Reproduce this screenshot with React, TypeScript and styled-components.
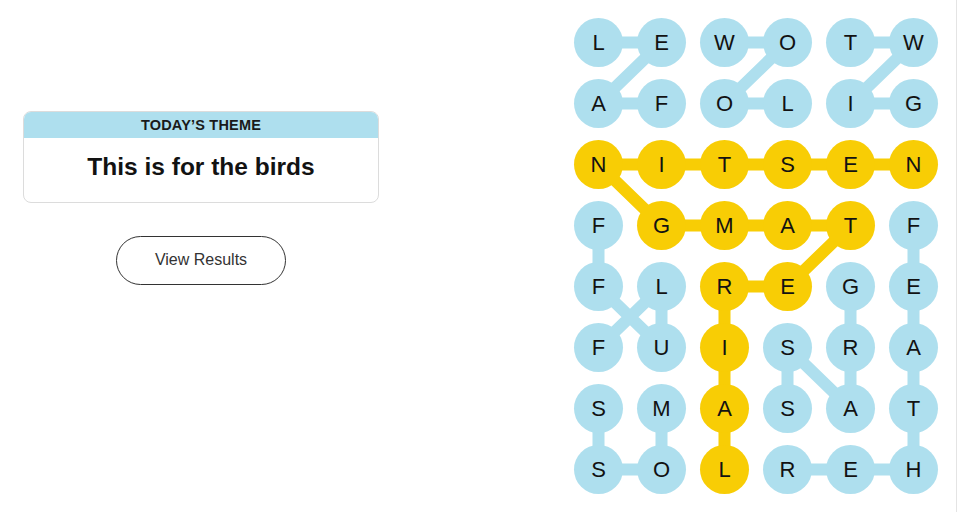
import styled, { createGlobalStyle } from "styled-components";

const GlobalStyle = createGlobalStyle`
    html, body {
        margin: 0;
        padding: 0;
        background: #ffffff;
    }
    body {
        font-family: "Liberation Sans", Arial, sans-serif;
        color: #121212;
    }
`

const BLUE = "#aedfee";
const GOLD = "#f8cd05";

const CELL = 49;
const COL_GAP = 14;
const ROW_GAP = 12;

const Page = styled.div`
    display: flex;
    justify-content: space-between;
    width: 957px;
    height: 512px;
    border-right: 1px solid #e4e4e4;
    box-sizing: border-box;
`

const Side = styled.div`
    display: flex;
    flex-direction: column;
    align-items: center;
    width: 356px;
    padding: 111px 0 0 23px;
`

const ThemeCard = styled.div`
    width: 100%;
    border: 1px solid #dcdcdc;
    border-radius: 8px;
    overflow: hidden;
    box-sizing: border-box;
`

const ThemeHeader = styled.div`
    background: ${BLUE};
    height: 26px;
    display: flex;
    align-items: center;
    justify-content: center;
    font-weight: 700;
    font-size: 14.5px;
    letter-spacing: 0.2px;
    color: #1a1a1a;
`

const ThemeText = styled.div`
    height: 58px;
    padding-bottom: 6px;
    display: flex;
    align-items: center;
    justify-content: center;
    font-weight: 700;
    font-size: 24.5px;
    color: #121212;
`

const ResultsButton = styled.button`
    margin-top: 33px;
    width: 170px;
    height: 49px;
    border-radius: 25px;
    border: 1px solid #333333;
    background: #ffffff;
    font-family: "Liberation Sans", Arial, sans-serif;
    font-size: 16px;
    color: #333333;
    padding: 0 0 2px;
    cursor: pointer;
`

const Board = styled.div`
    position: relative;
    margin: 18px 18px 0 0;
    display: grid;
    grid-template-columns: repeat(6, ${CELL}px);
    grid-auto-rows: ${CELL}px;
    column-gap: ${COL_GAP}px;
    row-gap: ${ROW_GAP}px;
    align-self: flex-start;
`

const Lines = styled.svg`
    position: absolute;
    left: 0;
    top: 0;
`

const Letter = styled.div<{ $found: "word" | "span" }>`
    position: relative;
    width: ${CELL}px;
    height: ${CELL}px;
    border-radius: 50%;
    background: ${p => (p.$found === "span" ? GOLD : BLUE)};
    display: flex;
    align-items: center;
    justify-content: center;
    font-size: 22px;
    color: #121212;
`

const grid = [
    "LEWOTW",
    "AFOLIG",
    "NITSEN",
    "FGMATF",
    "FLREGE",
    "FUISRA",
    "SMASAT",
    "SOLREH",
];

type Cell = [number, number];

// each path is a list of [row, col]
const words: { cells: Cell[]; span?: boolean }[] = [
    { cells: [[0, 0], [0, 1], [1, 0], [1, 1]] },
    { cells: [[0, 2], [0, 3], [1, 2], [1, 3]] },
    { cells: [[0, 4], [0, 5], [1, 4], [1, 5]] },
    { cells: [[5, 0], [4, 1], [5, 1], [4, 0], [3, 0]] },
    { cells: [[6, 1], [7, 1], [7, 0], [6, 0]] },
    { cells: [[4, 4], [5, 4], [6, 4], [5, 3], [6, 3]] },
    { cells: [[3, 5], [4, 5], [5, 5], [6, 5], [7, 5], [7, 4], [7, 3]] },
    {
        span: true,
        cells: [[2, 5], [2, 4], [2, 3], [2, 2], [2, 1], [2, 0], [3, 1], [3, 2], [3, 3], [3, 4], [4, 3], [4, 2], [5, 2], [6, 2], [7, 2]],
    },
];

const spanCells = new Set(words.filter(w => w.span).flatMap(w => w.cells.map(([r, c]) => `${r}-${c}`)));

const cx = (c: number) => CELL / 2 + c * (CELL + COL_GAP);
const cy = (r: number) => CELL / 2 + r * (CELL + ROW_GAP);

export default function App() {
    const width = 6 * CELL + 5 * COL_GAP;
    const height = 8 * CELL + 7 * ROW_GAP;

    return (
        <>
            <GlobalStyle />
            <Page>
                <Side>
                    <ThemeCard>
                        <ThemeHeader>TODAY’S THEME</ThemeHeader>
                        <ThemeText>This is for the birds</ThemeText>
                    </ThemeCard>
                    <ResultsButton>View Results</ResultsButton>
                </Side>

                <Board>
                    <Lines width={width} height={height}>
                        {words.map((w, i) => (
                            <polyline
                                key={i}
                                points={w.cells.map(([r, c]) => `${cx(c)},${cy(r)}`).join(" ")}
                                fill="none"
                                stroke={w.span ? GOLD : BLUE}
                                strokeWidth={12}
                                strokeLinejoin="round"
                            />
                        ))}
                    </Lines>
                    {grid.map((row, r) =>
                        row.split("").map((ch, c) => (
                            <Letter key={`${r}-${c}`} $found={spanCells.has(`${r}-${c}`) ? "span" : "word"}>
                                {ch}
                            </Letter>
                        ))
                    )}
                </Board>
            </Page>
        </>
    );
}
